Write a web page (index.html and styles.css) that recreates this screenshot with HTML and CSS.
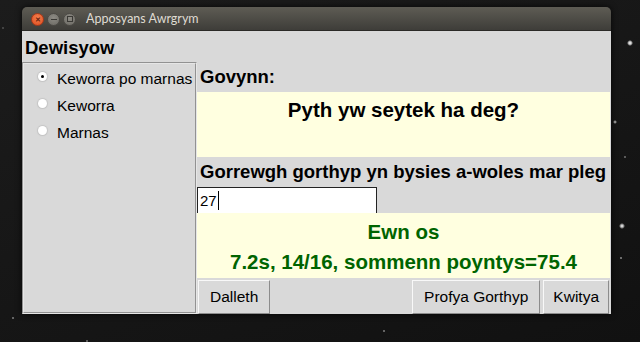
FILE: index.html
```html
<!DOCTYPE html>
<html lang="kw">
<head>
  <meta charset="UTF-8">
  <title>Apposyans Awrgrym</title>
  <link rel="stylesheet" href="styles.css">
</head>
<body>
  <div class="window">
    <div class="titlebar">
      <div class="controls">
        <span class="ctl ctl-close">&#x2715;</span>
        <span class="ctl ctl-min"><i class="bar"></i></span>
        <span class="ctl ctl-max"><i class="box"></i></span>
      </div>
      <span class="title">Apposyans Awrgrym</span>
    </div>
    <div class="content">
      <h1 class="heading">Dewisyow</h1>
      <div class="choices">
        <div class="choice"><span class="radio selected"></span>Keworra po marnas</div>
        <div class="choice"><span class="radio"></span>Keworra</div>
        <div class="choice"><span class="radio"></span>Marnas</div>
      </div>
      <div class="main">
        <div class="label">Govynn:</div>
        <div class="question">Pyth yw seytek ha deg?</div>
        <div class="label">Gorrewgh gorthyp yn bysies a-woles mar pleg</div>
        <div class="entry-row">
          <div class="entry">27<span class="caret"></span></div>
        </div>
        <div class="result">
          <div>Ewn os</div>
          <div>7.2s, 14/16, sommenn poyntys=75.4</div>
        </div>
        <div class="buttons">
          <button class="btn">Dalleth</button>
          <span class="spacer"></span>
          <button class="btn">Profya Gorthyp</button>
          <button class="btn btn-quit">Kwitya</button>
        </div>
      </div>
    </div>
  </div>
</body>
</html>
```

FILE: styles.css
```css
html, body {
  margin: 0;
  height: 342px;
  overflow: hidden;
}
body {
  font-family: 'Liberation Sans', Arial, sans-serif;
  background-color: #161616;
  background-image:
    radial-gradient(circle at 630px 43px, #fff 0, rgba(255,255,255,0.7) 1.5px, transparent 3px),
    radial-gradient(circle at 615px 122px, #ddd 0, transparent 2px),
    radial-gradient(circle at 622px 226px, #fff 0, rgba(255,255,255,0.6) 1.5px, transparent 3px),
    radial-gradient(circle at 621px 258px, #bbb 0, transparent 1.5px),
    radial-gradient(circle at 625px 157px, #999 0, transparent 1.5px),
    radial-gradient(circle at 13px 318px, #aaa 0, transparent 1.5px),
    radial-gradient(circle at 87px 341px, #999 0, transparent 1.5px),
    radial-gradient(circle at 384px 331px, #aaa 0, transparent 1.5px),
    radial-gradient(circle at 3px 28px, #666 0, transparent 1.5px),
    linear-gradient(160deg, #1c1c1c, #111);
  color: #000;
}
.window {
  margin: 7px 0 0 22px;
  width: 589px;
  box-shadow: 0 0 6px rgba(0,0,0,0.8);
  border-radius: 5px 5px 0 0;
}
.titlebar {
  height: 24px;
  display: flex;
  align-items: center;
  padding-left: 9px;
  background: linear-gradient(#5e5c54, #3e3d39);
  border-radius: 5px 5px 0 0;
  border-bottom: 1px solid #2b2a27;
  box-sizing: border-box;
}
.controls {
  display: flex;
  gap: 3px;
  margin-top: 1px;
}
.ctl {
  width: 13px;
  height: 13px;
  border-radius: 50%;
  display: flex;
  align-items: center;
  justify-content: center;
  box-sizing: border-box;
}
.ctl-close {
  background: radial-gradient(circle at 50% 35%, #f6814f, #dc4a1d);
  border: 1px solid #a8391a;
  color: #6a2410;
  font-size: 7px;
  font-weight: bold;
  line-height: 1;
}
.ctl-min, .ctl-max {
  background: radial-gradient(circle at 50% 35%, #8d8b84, #6b6963);
  border: 1px solid #4d4b46;
}
.bar {
  width: 6px;
  height: 1px;
  background: #3a3935;
}
.box {
  width: 4px;
  height: 4px;
  border: 1px solid #3a3935;
}
.title {
  margin-left: 10px;
  color: #dfdbd2;
  font-family: Lato, 'Open Sans', sans-serif;
  font-size: 12.5px;
}
.content {
  height: 283px;
  background: #d9d9d9;
  display: grid;
  grid-template-columns: 175px 1fr;
  grid-template-rows: 31px 1fr;
}
.heading {
  grid-column: 1 / -1;
  margin: 0;
  padding: 2px 0 0 3px;
  font-size: 18.5px;
  line-height: 29px;
}
.choices {
  border: 2px groove #e6e6e6;
  padding-top: 1px;
}
.choice {
  display: flex;
  align-items: center;
  height: 27px;
  font-size: 15.5px;
}
.radio {
  width: 9px;
  height: 9px;
  margin: 0 10px 5px 14px;
  border-radius: 50%;
  background: #fff;
  box-shadow: 0 0 1px 1px #c4c4c4;
  display: flex;
  align-items: center;
  justify-content: center;
}
.radio.selected::after {
  content: "";
  width: 3px;
  height: 3px;
  border-radius: 50%;
  background: #000;
}
.main {
  display: flex;
  flex-direction: column;
  margin-right: 1px;
}
.label {
  height: 30px;
  line-height: 30px;
  padding-left: 3px;
  font-size: 18.5px;
  font-weight: bold;
  white-space: nowrap;
}
.question {
  height: 65px;
  padding-top: 3px;
  box-sizing: border-box;
  background: #ffffe0;
  text-align: center;
  font-size: 20.5px;
  font-weight: bold;
  line-height: 30px;
}
.entry-row {
  height: 26px;
}
.entry {
  width: 180px;
  height: 27px;
  box-sizing: border-box;
  border: 1px solid #222;
  background: #fff;
  font-size: 15px;
  line-height: 25px;
  padding-left: 2px;
  display: flex;
  align-items: center;
}
.caret {
  width: 1px;
  height: 19px;
  background: #000;
  margin-left: 1px;
}
.result {
  height: 65px;
  padding-top: 4px;
  box-sizing: border-box;
  background: #ffffe0;
  color: #006400;
  text-align: center;
  font-size: 20.5px;
  font-weight: bold;
  line-height: 30px;
}
.buttons {
  height: 36px;
  display: flex;
  align-items: flex-end;
  gap: 3px;
  padding: 0 1px 0 1px;
}
.spacer {
  flex: 1;
}
.btn {
  height: 34px;
  padding: 0 11px;
  font-family: 'Liberation Sans', Arial, sans-serif;
  font-size: 15.5px;
  color: #000;
  background: #d9d9d9;
  border: 1px solid;
  border-color: #f8f8f8 #8c8c8c #8c8c8c #f8f8f8;
}
.btn-quit {
  padding: 0 9px;
}
```
